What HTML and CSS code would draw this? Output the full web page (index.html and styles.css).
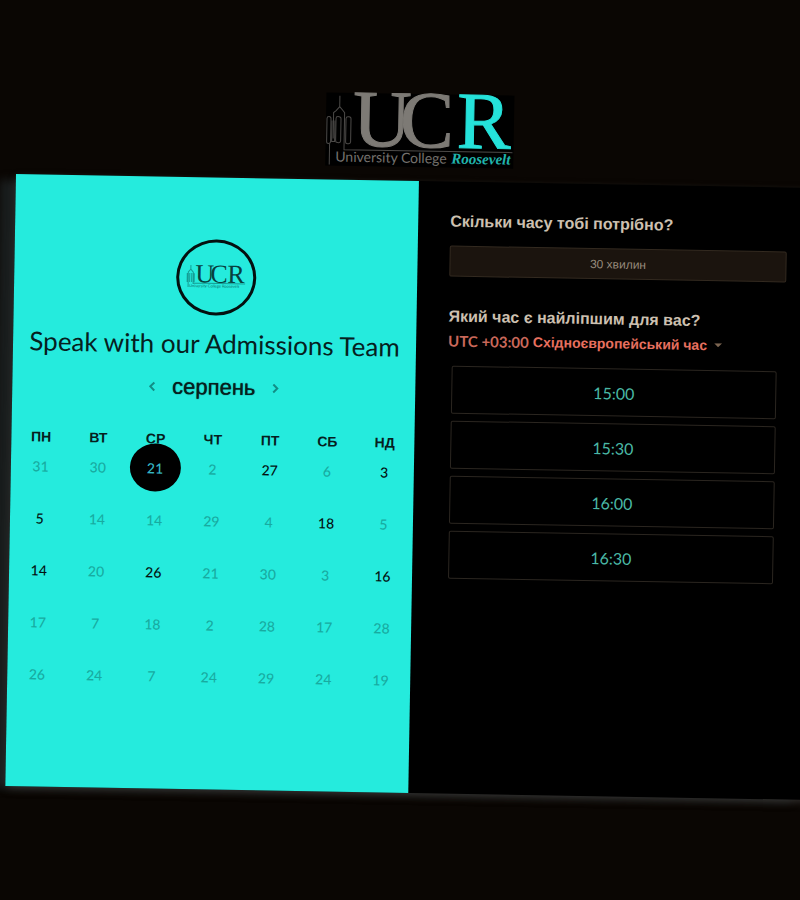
FILE: index.html
```html
<!DOCTYPE html>
<html lang="uk">
<head>
<meta charset="utf-8">
<meta name="viewport" content="width=device-width, initial-scale=1">
<title>Speak with our Admissions Team</title>
<link rel="stylesheet" href="styles.css">
</head>
<body>
<div class="page">
<main class="scheduler">
  <header class="brand">
    <svg class="brand-logo" viewBox="0 0 188 73" role="img" aria-label="University College Roosevelt">
      <g class="tower">
        <path d="M13.5 3V15M13.5 14L10 18L7.500 20V26M13.500 14L17 18L18.500 20V57H187M4 51V72"/>
        <rect x="1" y="24" width="4" height="27" rx="2"/>
        <path d="M6 28V49H9V28M7.500 25V46"/>
        <rect x="10" y="24" width="5" height="26" rx="2"/>
        <rect x="20" y="24" width="5" height="27" rx="2"/>
      </g>
      <text class="mark" x="27" y="53">U</text>
      <text class="mark" x="74" y="53">C</text>
      <text class="mark mark-accent" x="131" y="53">R</text>
      <text class="mark-name" x="10" y="69">University College</text>
      <text class="mark-roosevelt" x="126" y="69">Roosevelt</text>
    </svg>
  </header>

  <div class="card">
    <section class="calendar">
      <div class="avatar">
        <svg viewBox="0 0 60 26" role="img" aria-label="UCR">
          <path class="avatar-tower" d="M4.500 1V5L2 8V20M4.500 5L7 8V20M1 9V18M3.500 9V18M5.500 9V18M8 9V18M2 18V23M7 19H59"/>
          <text class="avatar-mark" x="9" y="18">U</text>
          <text class="avatar-mark" x="24" y="18">C</text>
          <text class="avatar-mark" x="41" y="18">R</text>
          <text class="avatar-name" x="3" y="23">University College Roosevelt</text>
        </svg>
      </div>
      <h1 class="title">Speak with our Admissions Team</h1>
      <div class="month">
        <button class="arrow" type="button" aria-label="Попередній місяць"><svg viewBox="0 0 8 10"><path d="M6 1L2 5L6 9"/></svg></button>
        <h2 class="month-name">серпень</h2>
        <button class="arrow" type="button" aria-label="Наступний місяць"><svg viewBox="0 0 8 10"><path d="M2 1L6 5L2 9"/></svg></button>
      </div>
      <table class="days">
        <thead><tr><th>ПН</th><th>ВТ</th><th>СР</th><th>ЧТ</th><th>ПТ</th><th>СБ</th><th>НД</th></tr></thead>
        <tbody>
          <tr><td><button disabled>31</button></td><td><button disabled>30</button></td><td><button class="selected">21</button></td><td><button disabled>2</button></td><td><button>27</button></td><td><button disabled>6</button></td><td><button>3</button></td></tr>
          <tr><td><button>5</button></td><td><button disabled>14</button></td><td><button disabled>14</button></td><td><button disabled>29</button></td><td><button disabled>4</button></td><td><button>18</button></td><td><button disabled>5</button></td></tr>
          <tr><td><button>14</button></td><td><button disabled>20</button></td><td><button>26</button></td><td><button disabled>21</button></td><td><button disabled>30</button></td><td><button disabled>3</button></td><td><button>16</button></td></tr>
          <tr><td><button disabled>17</button></td><td><button disabled>7</button></td><td><button disabled>18</button></td><td><button disabled>2</button></td><td><button disabled>28</button></td><td><button disabled>17</button></td><td><button disabled>28</button></td></tr>
          <tr><td><button disabled>26</button></td><td><button disabled>24</button></td><td><button disabled>7</button></td><td><button disabled>24</button></td><td><button disabled>29</button></td><td><button disabled>24</button></td><td><button disabled>19</button></td></tr>
        </tbody>
      </table>
    </section>

    <section class="times">
      <h3 class="question">Скільки часу тобі потрібно?</h3>
      <button class="duration" type="button">30 хвилин</button>
      <h3 class="question">Який час є найліпшим для вас?</h3>
      <button class="zone" type="button"><span class="zone-offset">UTC +03:00</span> Східноєвропейський час<svg class="caret" viewBox="0 0 8 4"><path d="M0 0H8L4 4Z"/></svg></button>
      <div class="slots">
        <button class="slot" type="button">15:00</button>
        <button class="slot" type="button">15:30</button>
        <button class="slot" type="button">16:00</button>
        <button class="slot" type="button">16:30</button>
      </div>
    </section>
  </div>
</main>
</div>
</body>
</html>
```
FILE: styles.css
```css
* {
  box-sizing: border-box;
}

body {
  margin: 0;
  background: #0a0603;
  font-family: Lato, "Liberation Sans", sans-serif;
}

button {
  margin: 0;
  padding: 0;
  border: 0;
  background: none;
  font: inherit;
  color: inherit;
  cursor: pointer;
}

h1,
h2,
h3 {
  margin: 0;
}

.page {
  min-height: 100vh;
  overflow: hidden;
}

/* The whole scheduler is tilted around the top left corner of the card. */
.scheduler {
  margin: 0 -22px 0 16px;
  padding: 87px 0 48px;
  transform: rotate(1deg);
  transform-origin: 0 174px;
}

.brand {
  display: flex;
  justify-content: center;
  margin-bottom: 14px;
}

.brand-logo {
  width: 188px;
  height: 73px;
  overflow: visible;
  background: #000;
}

.tower {
  fill: none;
  stroke: #4c4a48;
  stroke-width: 1;
}

.mark {
  font-family: "Liberation Serif", serif;
  font-size: 81px;
  fill: #7d7a75;
  stroke: #7d7a75;
  stroke-width: 1;
}

.mark-accent {
  fill: #25e2da;
  stroke: #25e2da;
}

.mark-name {
  font-size: 14px;
  fill: #74716d;
}

.mark-roosevelt {
  font-family: "Liberation Serif", serif;
  font-size: 15px;
  font-style: italic;
  font-weight: bold;
  fill: #20b5ad;
}

.card {
  display: grid;
  grid-template-columns: 1fr 1fr;
  min-height: 612px;
  background: #000;
  box-shadow: 0 3px 10px -2px #3a3836, -18px 4px 8px -2px #1a1e1e;
}

.calendar {
  padding: 62px 1px 0;
  background: #25ebdd;
  color: #06201e;
  text-align: center;
}

.avatar {
  display: flex;
  align-items: center;
  justify-content: center;
  width: 80px;
  height: 76px;
  margin: 0 auto;
  border: 3px solid #04100f;
  border-radius: 50%;
}

.avatar svg {
  width: 60px;
  height: 26px;
  overflow: visible;
}

.avatar-tower {
  fill: none;
  stroke: #159c93;
  stroke-width: 1;
}

.avatar-mark {
  font-family: "Liberation Serif", serif;
  font-size: 26px;
  fill: #08403d;
}

.avatar-name {
  font-size: 4px;
  fill: #0c6f69;
}

.title {
  margin-top: 12px;
  font-size: 26px;
  font-weight: 400;
  line-height: 32px;
  white-space: nowrap;
}

.month {
  display: flex;
  align-items: center;
  justify-content: center;
  gap: 16px;
  margin-top: 12px;
}

.month-name {
  font-family: "Liberation Sans", sans-serif;
  font-size: 22px;
  font-weight: 400;
  line-height: 32px;
  text-shadow: 0 0 1px #06201e;
}

.arrow {
  display: flex;
}

.arrow svg {
  width: 8px;
  height: 10px;
  fill: none;
  stroke: #128e86;
  stroke-width: 2;
}

.days {
  width: 100%;
  margin-top: 33px;
  border-collapse: collapse;
  table-layout: fixed;
}

.days th {
  padding: 0;
  font-family: "Liberation Sans", sans-serif;
  font-size: 14px;
  line-height: 6px;
}

.days td {
  height: 52px;
  padding: 0;
  font-size: 14px;
}

.days button {
  position: relative;
  width: 51px;
  height: 48px;
  border-radius: 50%;
  color: #031211;
  font-weight: 500;
  vertical-align: middle;
}

.days button:disabled {
  color: #18aba1;
  cursor: default;
}

.days .selected {
  background: #000;
  color: #35b6c4;
}

.times {
  padding: 30px 34px 0 32px;
  font-family: "Liberation Sans", sans-serif;
}

.question {
  color: #cdc0b0;
  font-size: 16px;
  line-height: 20px;
}

.duration {
  display: block;
  width: 100%;
  height: 31px;
  margin: 14px 0 30px;
  border: 1px solid #332a20;
  border-radius: 2px;
  background: #1b140e;
  color: #968a7b;
  font-size: 12px;
}

.zone {
  display: flex;
  align-items: center;
  gap: 4px;
  margin-top: 4px;
  color: #e8705f;
  font-size: 14px;
  font-weight: 700;
  line-height: 20px;
}

.zone-offset {
  color: #c9685a;
  font-family: Lato, sans-serif;
  font-size: 15px;
}

.caret {
  width: 8px;
  height: 4px;
  margin-left: 3px;
  fill: #7d6652;
}

.slots {
  display: grid;
  gap: 7px;
  margin: 15px 8px 0 4px;
}

.slot {
  height: 48px;
  border: 1px solid #2b2620;
  border-radius: 2px;
  color: #4ab8a5;
  font-family: Lato, sans-serif;
  font-size: 16px;
}
```
